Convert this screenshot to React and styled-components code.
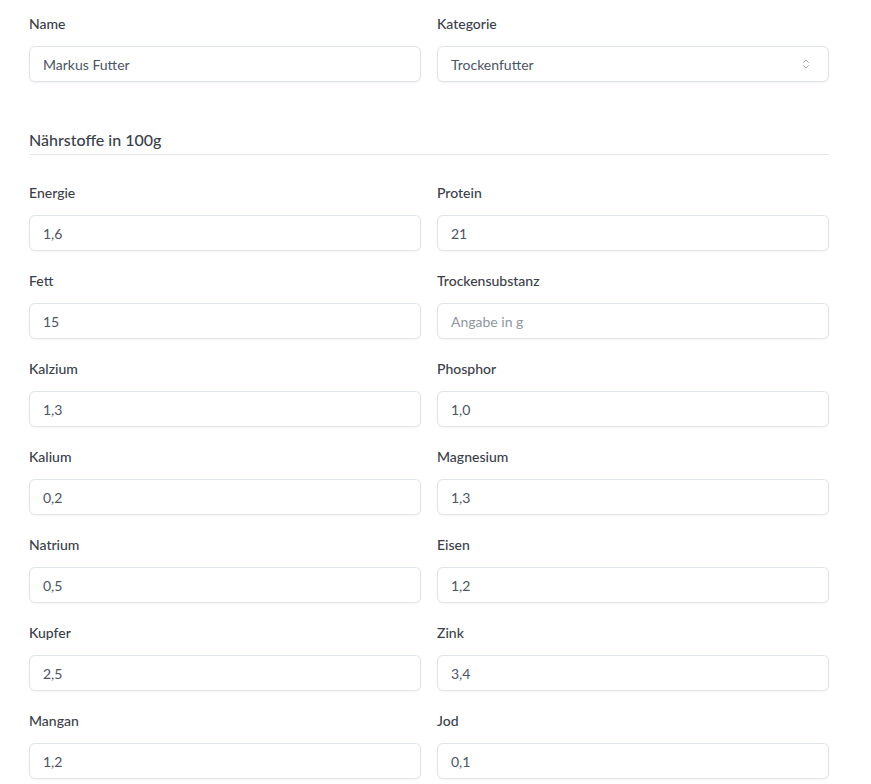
import React from 'react';
import styled, {createGlobalStyle} from "styled-components";

const GlobalStyle = createGlobalStyle`
  body {
    margin: 0;
    background: #ffffff;
    font-family: Lato, "Open Sans", sans-serif;
    color: #374151;
  }
`

const nutrients = [
    ["Energie", "1,6"], ["Protein", "21"],
    ["Fett", "15"], ["Trockensubstanz", ""],
    ["Kalzium", "1,3"], ["Phosphor", "1,0"],
    ["Kalium", "0,2"], ["Magnesium", "1,3"],
    ["Natrium", "0,5"], ["Eisen", "1,2"],
    ["Kupfer", "2,5"], ["Zink", "3,4"],
    ["Mangan", "1,2"], ["Jod", "0,1"],
]

const ChevronIcon = () => (
    <svg width="8" height="12" viewBox="0 0 8 12" fill="none" stroke="#a4aab3" strokeWidth="1" strokeLinecap="round" strokeLinejoin="round">
        <path d="M1.5 4.5 L4 2 L6.5 4.5"/>
        <path d="M1.5 7.5 L4 10 L6.5 7.5"/>
    </svg>
)

const App = () => {
    return (
        <>
            <GlobalStyle/>
            <Page>
                <Grid>
                    <Field>
                        <Label>Name</Label>
                        <Input defaultValue="Markus Futter"/>
                    </Field>
                    <Field>
                        <Label>Kategorie</Label>
                        <SelectBox>
                            <span>Trockenfutter</span>
                            <ChevronIcon/>
                        </SelectBox>
                    </Field>
                </Grid>

                <SectionTitle>Nährstoffe in 100g</SectionTitle>

                <Grid>
                    {nutrients.map(([name, value]) => (
                        <Field key={name}>
                            <Label>{name}</Label>
                            <Input defaultValue={value} placeholder="Angabe in g"/>
                        </Field>
                    ))}
                </Grid>
            </Page>
        </>
    )
}
export default App;

const Page = styled.div`
  width: 800px;
  padding: 14px 29px;
`

const Grid = styled.div`
  display: grid;
  grid-template-columns: 1fr 1fr;
  column-gap: 16px;
  row-gap: 20px;
`

const Field = styled.div`
  display: flex;
  flex-direction: column;
`

const Label = styled.label`
  font-size: 14px;
  line-height: 20px;
  font-weight: 500;
  color: #3a404a;
  margin-bottom: 12px;
`

const inputStyles = `
  box-sizing: border-box;
  height: 36px;
  width: 100%;
  border: 1px solid #dfe3ea;
  border-radius: 6px;
  background: #fff;
  box-shadow: 0 1px 2px rgba(16, 24, 40, 0.05);
  padding: 0 13px;
  font-family: Lato, "Open Sans", sans-serif;
  font-size: 14px;
  color: #4b5563;
`

const Input = styled.input`
  ${inputStyles}
  outline: none;

  &::placeholder {
    color: #8f96a1;
  }
`

const SelectBox = styled.div`
  ${inputStyles}
  display: flex;
  align-items: center;
  justify-content: space-between;
  padding-right: 18px;
`

const SectionTitle = styled.h3`
  margin: 46px 0 28px;
  padding-bottom: 2px;
  border-bottom: 1px solid #e3e7ee;
  font-size: 16px;
  line-height: 24px;
  font-weight: 500;
  color: #3a404a;
`
